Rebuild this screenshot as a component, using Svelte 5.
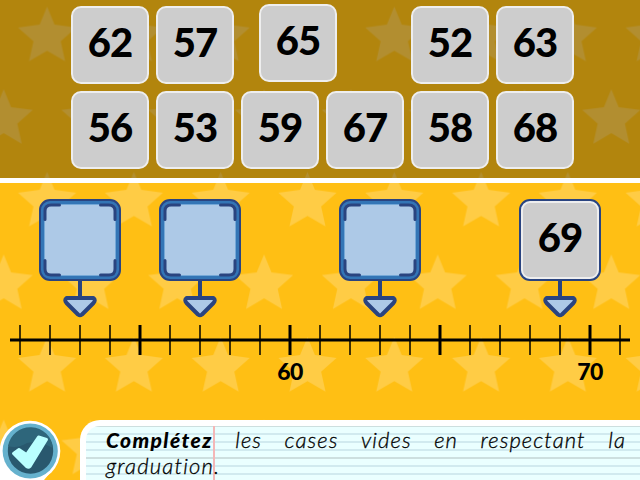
<script>
  const firstRow = [62, 57, 65, null, 52, 63];
  const secondRow = [56, 53, 59, 67, 58, 68];
  const targets = [
    { x: 80, value: null },
    { x: 200, value: null },
    { x: 380, value: null },
    { x: 560, value: 69 }
  ];
  const ticks = Array.from({ length: 21 }, (_, i) => ({ x: 20 + i * 30, major: i % 5 === 4 }));
  const words = ['les', 'cases', 'vides', 'en', 'respectant', 'la'];
  const star = 'l7.4 17.9 21.6 2.9 -15.4 13.7 4.4 20 -18 -10.5 -18 10.5 4.4 -20 -15.4 -13.7 21.6 -2.9z';
</script>

<main>
  <svg class="stars" width="640" height="480" aria-hidden="true">
    <defs>
      <pattern id="stars" x="3.7" y="6.7" width="86.8" height="165.2" patternUnits="userSpaceOnUse">
        <path d="M43.4 0{star}M0 82.5{star}M86.8 82.5{star}" fill="#ffcc45" />
      </pattern>
    </defs>
    <rect width="640" height="480" fill="url(#stars)" />
  </svg>

  <section class="bank">
    {#each [firstRow, secondRow] as row}
      <div class="row">
        {#each row as n}
          <div class="tile" class:empty={n === null} class:dragged={n === 65}>{n ?? ''}</div>
        {/each}
      </div>
    {/each}
  </section>
  <div class="rule"></div>

  <section class="board">
    {#each targets as t}
      <div class="target" style:left="{t.x - 41}px">
        <svg width="82" height="120" viewBox="0 0 82 120">
          <rect x="1" y="1" width="80" height="80" rx="10" fill="#3375b6" stroke="#2a4480" stroke-width="2" />
          <rect x="5.5" y="5.5" width="71" height="71" rx="6" fill="#adc9e7" stroke="#75a8d7" stroke-width="1" />
          <path d="M6 20.5V12Q6 6 12 6H20.5M61.500 6H70Q76 6 76 12V20.500M76 61.500V70Q76 76 70 76H61.500M20.500 76H12Q6 76 6 70V61.500" fill="none" stroke="#2a4480" stroke-width="3" stroke-linecap="round" />
          <path d="M41 82V99" stroke="#2a4480" stroke-width="4" />
          <path d="M27.500 99H54.500Q57 101 54.500 104L43 115.500Q41 117 39 115.500L27.500 104Q25 101 27.500 99Z" fill="#adc9e7" stroke="#2a4480" stroke-width="4" stroke-linejoin="round" />
        </svg>
        {#if t.value}<div class="tile placed">{t.value}</div>{/if}
      </div>
    {/each}
    <svg class="axis" width="640" height="40" viewBox="0 320 640 40">
      {#each ticks as t}
        <path d="M{t.x} 325V355" stroke="#000" stroke-width={t.major ? 3 : 1.5} />
      {/each}
      <path d="M10 340H630" stroke="#000" stroke-width="3" />
    </svg>
    <span class="label" style:left="270px">60</span>
    <span class="label" style:left="570px">70</span>
  </section>

  <footer>
    <svg class="check" width="80" height="60" viewBox="0 420 80 60">
      <circle cx="30" cy="451" r="30.3" fill="#fff" />
      <path d="M0 451V480H44L55 467Z" fill="#fff" />
      <circle cx="30.200" cy="451" r="27.600" fill="#65b1cd" />
      <circle cx="30.500" cy="451" r="22.700" fill="#29586e" />
      <path d="M8 446A22.700 22.700 0 0 1 53 448Q38 440 27 443Q17 449 8 446Z" fill="#2e667b" />
      <path d="M13.500 453.500L19 449.500L26.500 454.500L38.500 437L46.500 439.500L30 466.500Q28.500 468 26.500 466.500Z" fill="#baffff" stroke="#baffff" stroke-width="3" stroke-linejoin="round" />
    </svg>
    <div class="panel">
      <div class="paper">
        <div class="margin"></div>
        <p><b>Complétez</b>{#each words as w}<span>{w}</span>{/each}</p>
        <p class="last"><span>graduation.</span></p>
      </div>
    </div>
  </footer>
</main>

<style>
  :global(body) { margin: 0; overflow: hidden; }
  main {
    position: relative;
    width: 640px;
    height: 480px;
    overflow: hidden;
    display: flex;
    flex-direction: column;
    background: #ffbf14;
    color: #000;
    font-family: Lato, "Liberation Sans", sans-serif;
  }
  .stars { position: absolute; inset: 0; }
  .bank {
    position: relative;
    box-sizing: border-box;
    height: 177.5px;
    padding: 6px 0 0 71px;
    display: flex;
    flex-direction: column;
    gap: 7px;
    background: rgba(0, 0, 0, .3);
  }
  .row { display: flex; gap: 7px; }
  .tile {
    box-sizing: border-box;
    width: 78px;
    height: 78px;
    border: 2px solid #eee;
    border-radius: 10px;
    background: #cdcdcd;
    text-align: center;
    font-size: 40px;
    line-height: 69px;
    font-weight: 900;
    letter-spacing: -1px;
  }
  .empty { visibility: hidden; }
  .dragged { position: relative; left: 18px; top: -2px; }
  .rule { position: relative; height: 5px; margin-bottom: -.5px; background: #fff; flex: none; }
  .board { position: relative; height: 238px; flex: none; }
  .target { position: absolute; top: 17px; width: 82px; height: 120px; }
  .placed { position: absolute; left: 2px; top: 2px; border-radius: 9px; }
  .axis { position: absolute; left: 0; top: 138px; }
  .label {
    position: absolute;
    top: 175px;
    width: 40px;
    text-align: center;
    font-size: 23px;
    line-height: 28px;
    font-weight: 900;
    letter-spacing: -.5px;
  }
  footer { position: relative; display: flex; height: 60px; flex: none; }
  .check { display: block; flex: none; }
  .panel {
    flex: 1;
    box-sizing: border-box;
    padding: 6px 0 0 6px;
    background: #fff;
    border-top-left-radius: 20px;
  }
  .paper {
    position: relative;
    box-sizing: border-box;
    height: 54px;
    padding: 1px 14px 0 20px;
    border-top-left-radius: 14px;
    overflow: hidden;
    background:
      linear-gradient(#cddfdf, #cddfdf) 0 0 / 100% 1px no-repeat,
      linear-gradient(#cddfdf, #cddfdf) 0 31px / 100% 2px no-repeat,
      linear-gradient(#d1eaef 0 2px, #eaffff 2px 8px) 0 7px / 100% 8px;
  }
  .margin { position: absolute; left: 127px; top: 0; width: 2px; height: 54px; background: #f4b7b7; }
  p {
    position: relative;
    display: flex;
    justify-content: space-between;
    margin: 0;
    font-size: 22px;
    line-height: 26px;
    font-style: italic;
    font-weight: 300;
    letter-spacing: 1.1px;
    -webkit-text-stroke: .3px #000;
  }
  b { font-weight: 900; font-size: 21px; letter-spacing: 1.400px; -webkit-text-stroke: 0; }
  .last { justify-content: flex-start; letter-spacing: 1.2px; }
</style>
